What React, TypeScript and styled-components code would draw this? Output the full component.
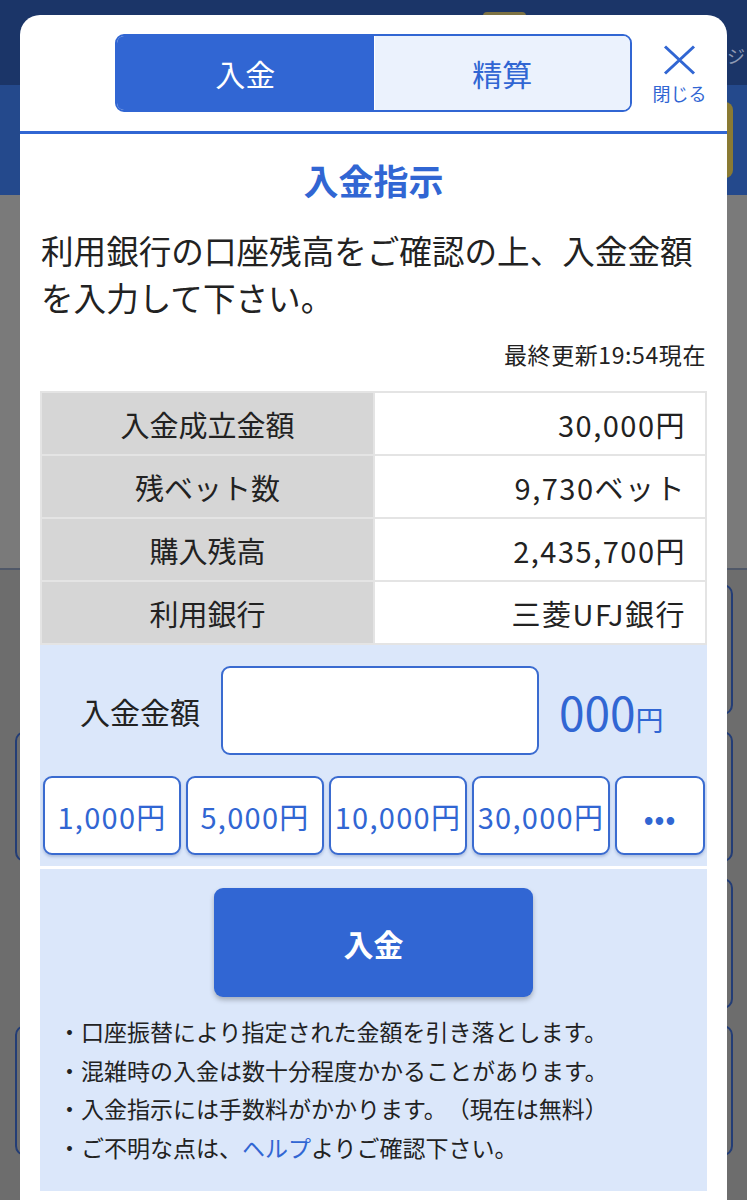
import React from "react";
import styled, { createGlobalStyle } from "styled-components";

const BLUE = "#3166d3";
const PALE = "#dbe7fa";

const GlobalStyle = createGlobalStyle`
  html, body {
    margin: 0;
    padding: 0;
    background: #6d6d6d;
  }
  body {
    font-family: "Noto Sans CJK JP", "Noto Sans", sans-serif;
    color: #222;
    text-spacing-trim: space-all;
  }
`;

const Screen = styled.div`
  position: relative;
  width: 747px;
  height: 1200px;
  overflow: hidden;
  background: #6d6d6d;
`;

/* dimmed page behind the dialog */
const PageHeader = styled.header`
  height: 85px;
  background: #1b3568;
  display: flex;
  align-items: flex-start;
  justify-content: space-between;
  padding: 12px 2px 0 483px;
  box-sizing: border-box;
`;

const HeaderIcon = styled.div`
  width: 43px;
  height: 30px;
  border-radius: 4px;
  background: #7d7243;
`;

const HeaderLink = styled.span`
  margin-top: 33px;
  font-size: 18px;
  line-height: 20px;
  color: #8f9ab4;
  white-space: nowrap;
`;

const PageSubBar = styled.div`
  height: 110px;
  background: #24498c;
  display: flex;
  justify-content: flex-end;
  align-items: center;
  padding-right: 14px;
`;

const GoldButton = styled.div`
  width: 120px;
  height: 76px;
  border-radius: 8px;
  background: #8a7a33;
`;

const PageBody = styled.div`
  height: 373px;
  background: #7a7a7a;
  border-bottom: 2px solid #505868;
`;

const CardList = styled.div`
  display: flex;
  flex-direction: column;
  gap: 16px;
  padding: 14px 14px 0 15px;
`;

const BgCard = styled.div<{ $inset?: boolean }>`
  height: 127px;
  margin-left: ${(p) => (p.$inset ? "30px" : "0")};
  border: 2px solid #233d76;
  border-radius: 10px;
  background: #6e6e6e;
`;

/* dialog */
const Dialog = styled.div`
  position: absolute;
  top: 15px;
  left: 20px;
  width: 707px;
  bottom: 0;
  background: #fff;
  border-radius: 20px 20px 0 0;
  display: flex;
  flex-direction: column;
`;

const DialogHeader = styled.div`
  height: 116px;
  border-bottom: 3px solid ${BLUE};
  display: flex;
  align-items: flex-start;
  padding-left: 95px;
`;

const TabGroup = styled.div`
  margin-top: 19px;
  width: 517px;
  height: 78px;
  box-sizing: border-box;
  border: 2px solid ${BLUE};
  border-radius: 9px;
  overflow: hidden;
  display: grid;
  grid-template-columns: 1fr 1fr;
`;

const Tab = styled.button<{ $active?: boolean }>`
  border: none;
  margin: 0;
  padding: 0;
  font-family: inherit;
  font-size: 30px;
  line-height: 1;
  background: ${(p) => (p.$active ? BLUE : "#ebf2fd")};
  color: ${(p) => (p.$active ? "#fff" : BLUE)};
  border-left: ${(p) => (p.$active ? "none" : "1px solid #fff")};
`;

const CloseButton = styled.button`
  flex: 1;
  border: none;
  background: none;
  padding: 30px 0 0;
  display: flex;
  flex-direction: column;
  align-items: center;
  gap: 8px;
  font-family: inherit;
  color: ${BLUE};
  font-size: 18px;
  line-height: 20px;
`;

const Content = styled.div`
  padding: 0 20px 8px;
  display: flex;
  flex-direction: column;
`;

const Title = styled.h1`
  margin: 21px 0 0;
  font-size: 35px;
  line-height: 50px;
  font-weight: 700;
  text-align: center;
  color: ${BLUE};
`;

const Lead = styled.p`
  margin: 21px 0 0;
  padding-left: 1px;
  font-size: 32.6px;
  line-height: 47px;
  color: #222;
`;

const Updated = styled.div`
  margin-top: 20px;
  padding-right: 1px;
  text-align: right;
  font-size: 23px;
  letter-spacing: 0.6px;
  line-height: 28px;
  color: #222;
`;

const InfoTable = styled.div`
  margin-top: 23px;
  padding: 2px;
  background: #e4e4e4;
  display: grid;
  grid-template-columns: 331px 1fr;
  grid-auto-rows: 61px;
  gap: 2px;
`;

const InfoLabel = styled.div`
  background: #d6d6d6;
  display: flex;
  align-items: center;
  justify-content: center;
  font-size: 29px;
  color: #222;
`;

const InfoValue = styled.div`
  background: #fff;
  display: flex;
  align-items: center;
  justify-content: flex-end;
  padding-right: 19px;
  font-size: 29px;
  letter-spacing: 1.5px;
  color: #222;
`;

const AmountPanel = styled.div`
  background: ${PALE};
  padding: 21px 2px 11px 3px;
`;

const AmountRow = styled.div`
  height: 89px;
  display: grid;
  grid-template-columns: 178px 318px 1fr;
  align-items: center;
`;

const AmountLabel = styled.label`
  justify-self: end;
  padding-right: 21px;
  font-size: 30px;
  color: #222;
`;

const AmountInput = styled.input`
  width: 318px;
  height: 89px;
  box-sizing: border-box;
  border: 2px solid #3a6bd0;
  border-radius: 9px;
  background: #fff;
  outline: none;
`;

const AmountPreview = styled.div`
  padding-left: 20px;
  color: ${BLUE};
  font-size: 46px;
  line-height: 1;
  white-space: nowrap;
`;

const Yen = styled.span`
  font-size: 28px;
`;

const QuickRow = styled.div`
  margin-top: 21px;
  display: grid;
  grid-template-columns: repeat(4, 138px) 1fr;
  gap: 5px;
`;

const QuickButton = styled.button`
  height: 79px;
  box-sizing: border-box;
  border: 2px solid #3a6bd0;
  border-radius: 9px;
  background: #fff;
  box-shadow: 0 2px 3px rgba(40, 70, 140, 0.25);
  color: ${BLUE};
  font-family: inherit;
  font-size: 29px;
  padding: 0;
  letter-spacing: 1.3px;
  white-space: nowrap;
`;

const MoreDots = styled.span`
  font-size: 26px;
  font-weight: 700;
  letter-spacing: 1px;
`;

const SubmitPanel = styled.div`
  margin-top: 3px;
  background: ${PALE};
  padding: 19px 0 25px;
  display: flex;
  flex-direction: column;
`;

const SubmitButton = styled.button`
  align-self: center;
  width: 319px;
  height: 109px;
  border: none;
  border-radius: 9px;
  background: ${BLUE};
  box-shadow: 0 3px 5px rgba(0, 0, 0, 0.25);
  color: #fff;
  font-family: inherit;
  font-size: 30px;
  font-weight: 700;
`;

const Notes = styled.ul`
  list-style: none;
  margin: 15px 0 0;
  padding: 0 0 0 18px;
  font-size: 23px;
  line-height: 38.5px;
  color: #222;
`;

const HelpLink = styled.a`
  color: ${BLUE};
  text-decoration: none;
`;

const rows: [string, string][] = [
  ["入金成立金額", "30,000円"],
  ["残ベット数", "9,730ベット"],
  ["購入残高", "2,435,700円"],
  ["利用銀行", "三菱UFJ銀行"],
];

const quickAmounts = ["1,000円", "5,000円", "10,000円", "30,000円"];

export default function App() {
  return (
    <Screen>
      <GlobalStyle />
      <PageHeader>
        <HeaderIcon />
        <HeaderLink>マイページ</HeaderLink>
      </PageHeader>
      <PageSubBar>
        <GoldButton />
      </PageSubBar>
      <PageBody />
      <CardList>
        <BgCard $inset />
        <BgCard />
        <BgCard $inset />
        <BgCard />
      </CardList>

      <Dialog>
        <DialogHeader>
          <TabGroup>
            <Tab $active>入金</Tab>
            <Tab>精算</Tab>
          </TabGroup>
          <CloseButton>
            <svg width="33" height="30" viewBox="0 0 33 30">
              <path d="M2 1.5 L31 28.5 M31 1.5 L2 28.5" stroke={BLUE} strokeWidth="3" fill="none" />
            </svg>
            閉じる
          </CloseButton>
        </DialogHeader>

        <Content>
          <Title>入金指示</Title>
          <Lead>利用銀行の口座残高をご確認の上、入金金額を入力して下さい。</Lead>
          <Updated>最終更新19:54現在</Updated>

          <InfoTable>
            {rows.map(([label, value]) => (
              <React.Fragment key={label}>
                <InfoLabel>{label}</InfoLabel>
                <InfoValue>{value}</InfoValue>
              </React.Fragment>
            ))}
          </InfoTable>

          <AmountPanel>
            <AmountRow>
              <AmountLabel>入金金額</AmountLabel>
              <AmountInput type="text" inputMode="numeric" />
              <AmountPreview>
                000<Yen>円</Yen>
              </AmountPreview>
            </AmountRow>
            <QuickRow>
              {quickAmounts.map((a) => (
                <QuickButton key={a}>{a}</QuickButton>
              ))}
              <QuickButton>
                <MoreDots>•••</MoreDots>
              </QuickButton>
            </QuickRow>
          </AmountPanel>

          <SubmitPanel>
            <SubmitButton>入金</SubmitButton>
            <Notes>
              <li>・口座振替により指定された金額を引き落とします。</li>
              <li>・混雑時の入金は数十分程度かかることがあります。</li>
              <li>・入金指示には手数料がかかります。（現在は無料）</li>
              <li>
                ・ご不明な点は、<HelpLink href="#">ヘルプ</HelpLink>よりご確認下さい。
              </li>
            </Notes>
          </SubmitPanel>
        </Content>
      </Dialog>
    </Screen>
  );
}
